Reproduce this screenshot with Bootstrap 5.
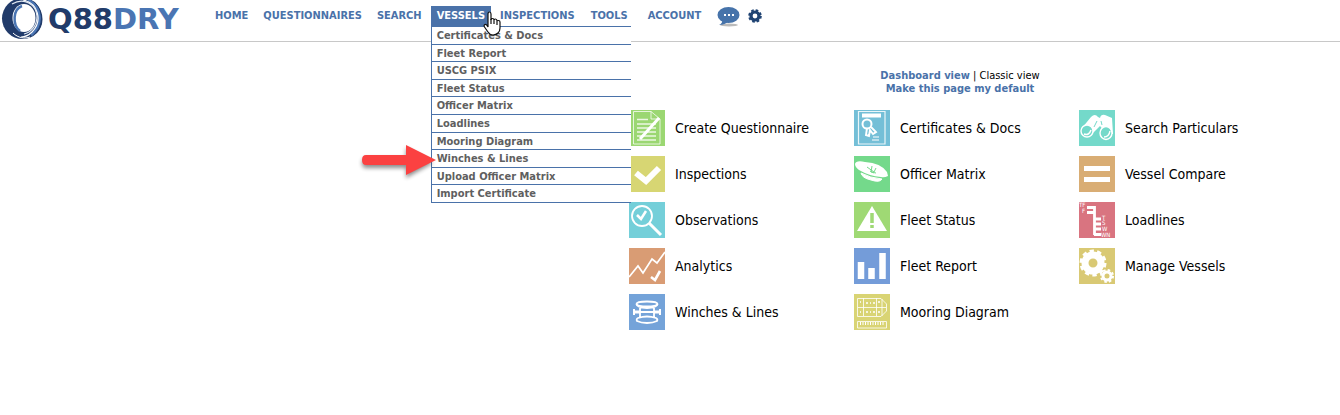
<!DOCTYPE html>
<html lang="en">
<head>
<meta charset="utf-8">
<meta name="viewport" content="width=device-width, initial-scale=1">
<title>Q88DRY</title>
<link href="https://cdn.jsdelivr.net/npm/bootstrap@5.3.0/dist/css/bootstrap.min.css" rel="stylesheet">
<style>
  :root { --q-blue: #4a72a9; --q-navy: #213b6a; --q-grey: #5f5f5f; }
  body { font-family: "DejaVu Sans Condensed", "DejaVu Sans", sans-serif; font-size: 11px; line-height: 13px; color: #000; background: #fff; }
  a { color: var(--q-blue); text-decoration: none; }
  .top-bar { height: 42px; border-bottom: 1px solid #c8c8c8; }
  .brand-link { width: 207px; height: 41px; }
  .brand-name { font: bold 29px/38px "DejaVu Sans", sans-serif; color: var(--q-navy); margin-left: 5px; }
  .brand-name span { color: #4a75b3; }
  .menu-bar { padding-top: 6px; font-weight: bold; }
  .menu-bar .nav-link { height: 20px; padding: 0 8px 0 7px; line-height: 20px; color: var(--q-blue); font-size: 11px; white-space: nowrap; }
  .menu-bar .nav-link.active { background: var(--q-blue); color: #fff; padding: 0 6px; }
  .menu-bar .active-item { margin: 0 1px; }
  .menu-bar .active-item ~ .nav-item > .nav-link { padding: 0 8px; }
  .menu-bar .nav { padding-left: 1px; }
  .menu-bar .icon-item { margin-left: 8px; }
  .vessel-menu { top: 20px; left: 0; width: 200px; height: 177px; background: #fff; border: solid var(--q-blue); border-width: 1px 0 0 1px; z-index: 5; }
  .vessel-menu li { flex: 1 1 0; border-bottom: 1px solid var(--q-blue); }
  .vessel-menu a { color: var(--q-grey); padding-left: 5px; line-height: 17px; display: block; height: 16px; }
  .pointer { left: 52px; top: 5px; z-index: 7; }
  .marker { left: -74px; top: 124px; z-index: 6; overflow: visible; }
  .marker .soft { filter: blur(2px); }
  .content-pane { margin-left: calc(50% - 41px); max-width: 662px; padding-top: 27px; }
  .tile-grid { display: grid; grid-template-columns: 225px 225px 1fr; row-gap: 10px; margin-top: 15px; }
  .tile { font-size: 14px; line-height: 18px; color: #000; gap: 10px; }
  .tile svg { width: 36px; height: 36px; flex: none; fill: none; stroke: #fff; }
</style>
</head>
<body>
<header class="top-bar d-flex">
  <a href="#" class="brand-link d-flex flex-shrink-0" aria-label="Q88DRY home">
    <svg width="43" height="41" viewBox="0 0 43 41" class="flex-shrink-0">
      <circle cx="22.500" cy="18.500" r="20.500" fill="#213b6a"/>
      <path d="M36 3C47 15 44 34 28 40L43 41V0Z" fill="#fff"/>
      <path d="M28 0C41 7 44 24 31 35" fill="none" stroke="#4a75b3" stroke-width="3"/>
      <path d="M23 0C38 3 43 21 32 32C29 35 25 37 21 37" fill="none" stroke="#fff" stroke-width="1.200"/>
      <path d="M12 4C24 -3 36 4 37 16C37 25 32 32 24 34" fill="none" stroke="#dfe7f2" stroke-width="1.200"/>
      <ellipse cx="24" cy="18" rx="11.500" ry="14" fill="#fff"/>
      <path d="M22 6C13 9 12 25 20 31" fill="none" stroke="#4a75b3" stroke-width="2.500"/>
      <path d="M13 33C18 38 25 39 30 37" fill="none" stroke="#fff" stroke-width="1"/>
    </svg>
    <span class="brand-name">Q88<span>DRY</span></span>
  </a>
  <nav class="menu-bar" aria-label="Main">
    <ul class="nav flex-nowrap">
      <li class="nav-item"><a class="nav-link" href="#">HOME</a></li>
      <li class="nav-item"><a class="nav-link" href="#">QUESTIONNAIRES</a></li>
      <li class="nav-item"><a class="nav-link" href="#">SEARCH</a></li>
      <li class="nav-item active-item position-relative">
        <a class="nav-link active" href="#" aria-expanded="true">VESSELS</a>
        <ul class="vessel-menu position-absolute list-unstyled d-flex flex-column m-0">
          <li><a href="#">Certificates &amp; Docs</a></li>
          <li><a href="#">Fleet Report</a></li>
          <li><a href="#">USCG PSIX</a></li>
          <li><a href="#">Fleet Status</a></li>
          <li><a href="#">Officer Matrix</a></li>
          <li><a href="#">Loadlines</a></li>
          <li><a href="#">Mooring Diagram</a></li>
          <li><a href="#">Winches &amp; Lines</a></li>
          <li><a href="#">Upload Officer Matrix</a></li>
          <li><a href="#">Import Certificate</a></li>
        </ul>
        <svg class="pointer position-absolute" width="18" height="25" viewBox="0 0 18 25">
          <path d="M5 16V3Q5 1 6.500 1T8 3V9Q8 7.500 9.500 7.500T11 9Q11 8 12.500 8T14 10Q14 9.500 15.500 9.500T17 11V17Q17 20 15 22Q13 24 10 24Q7 24 5 21L1.500 16Q.5 14 2 13.500T5 16Z" fill="#fff" stroke="#111" stroke-width="1.200"/>
          <path d="M8 8V13M11 9V13M14 10V14" stroke="#111" stroke-width="1.200"/>
        </svg>
        <svg class="marker position-absolute" width="90" height="46" viewBox="0 0 90 46">
          <path class="soft" d="M9 38Q5 38 5 33T9 28H49V18L76 33L49 48V38Z" fill="#000" opacity=".45"/>
          <path d="M9 35Q5 35 5 30T9 25H49V15L79 30L49 45V35Z" fill="#fb4141"/>
        </svg>
      </li>
      <li class="nav-item"><a class="nav-link" href="#">INSPECTIONS</a></li>
      <li class="nav-item"><a class="nav-link" href="#">TOOLS</a></li>
      <li class="nav-item ms-1"><a class="nav-link" href="#">ACCOUNT</a></li>
      <li class="nav-item icon-item"><a href="#" aria-label="Messages" class="d-block">
        <svg class="d-block" width="23" height="21" viewBox="0 0 23 21"><ellipse cx="12" cy="19" rx="9" ry="1.500" fill="#bbb"/><ellipse cx="11.500" cy="9" rx="11" ry="8" fill="#4673aa"/><path d="M5 14Q6 17 2 19Q8 19 12 15Z" fill="#4673aa"/><path d="M7 9H9M11 9H13M15 9H17" stroke="#fff" stroke-width="2"/></svg>
      </a></li>
      <li class="nav-item icon-item"><a href="#" aria-label="Settings" class="d-block">
        <svg class="d-block" width="14" height="20" viewBox="0 0 14 20"><circle cx="7" cy="10" r="4" fill="none" stroke="#1f4373" stroke-width="3.200"/><circle cx="7" cy="10" r="5.800" fill="none" stroke="#1f4373" stroke-width="2" stroke-dasharray="2.600 1.950"/></svg>
      </a></li>
    </ul>
  </nav>
</header>

<main class="content-pane">
  <div class="text-center">
    <a href="#" class="fw-bold">Dashboard view</a> | Classic view<br>
    <a href="#" class="fw-bold">Make this page my default</a>
  </div>
  <div class="tile-grid">
    <a href="#" class="tile d-flex align-items-center"><svg viewBox="0 0 36 36"><path fill="#9bd772" stroke="none" d="M0 0H36V36H0Z"/><path d="M4.500 1.500H22L31 9V34H4.500ZM22 1.500V9H31" opacity=".75"/><path d="M8 9.500H19M8 14H27M8 18H27M8 22H27M8 26H27M8 30H27" opacity=".8" stroke-width="1.400"/><path d="M11 29L30 8" stroke-width="3"/></svg>Create Questionnaire</a>
    <a href="#" class="tile d-flex align-items-center"><svg viewBox="0 0 36 36"><path fill="#74bfd7" stroke="none" d="M0 0H36V36H0Z"/><path d="M4.500 1.500H31V34H4.500Z" stroke-width="1.200" opacity=".85"/><path d="M8 5.500H27" stroke-width="4"/><circle cx="13" cy="14" r="4.500" stroke-width="2"/><path d="M13 18L12 25L15 26L16 20L19 24L22 22L17 17" stroke-width="1.900"/><path d="M19 27H25M18 30H25" stroke-width="1.200"/></svg>Certificates &amp; Docs</a>
    <a href="#" class="tile d-flex align-items-center"><svg viewBox="0 0 36 36"><path fill="#74d9ca" stroke="none" d="M0 0H36V36H0Z"/><path d="M3 18L12 7Q16 3 19 7L21 8Q22 4 26 5L33 8L34 24H28L21 16L13 24Z" fill="#fff" stroke="none"/><circle cx="8" cy="21" r="6" fill="#74d9ca" stroke-width="1.400"/><ellipse cx="27" cy="23" rx="6" ry="6.500" fill="#74d9ca" stroke-width="1.400"/><path d="M5 24Q10 26 12 20M25 27Q30 27 31 21" stroke-width="1.500"/><path d="M18 11L15 17M22 11L23 15" stroke="#74d9ca"/></svg>Search Particulars</a>

    <a href="#" class="tile d-flex align-items-center"><svg viewBox="0 0 36 36"><path fill="#d7d673" stroke="none" d="M0 0H36V36H0Z"/><path d="M7 17L17 25L30 12" stroke-width="6"/></svg>Inspections</a>
    <a href="#" class="tile d-flex align-items-center"><svg viewBox="0 0 36 36"><path fill="#74d98b" stroke="none" d="M0 0H36V36H0Z"/><path d="M1 8Q2 4 11 6Q27 7 33 16L34 20Q30 22 27 21Q15 20 5 14Q1 11 1 8Z" fill="#fff" stroke="none"/><path d="M7 17Q16 22 28 23Q26 27 17 24Q8 22 7 17Z" fill="#fff"/><path d="M13 11L20 16L22 12M18 10L17 16L22 17M16 15L20 17" stroke="#74d98b"/></svg>Officer Matrix</a>
    <a href="#" class="tile d-flex align-items-center"><svg viewBox="0 0 36 36"><path fill="#d9ad74" stroke="none" d="M0 0H36V36H0Z"/><path d="M5 12.500H31M5 23.500H31" stroke-width="5"/></svg>Vessel Compare</a>

    <a href="#" class="tile d-flex align-items-center"><svg viewBox="0 0 36 36"><path fill="#74cfd9" stroke="none" d="M0 0H36V36H0Z"/><circle cx="13" cy="14" r="10" stroke-width="1.800"/><path d="M20 21L32 33" stroke-width="3"/><path d="M8 13L12 17L17 9" stroke-width="2.500"/></svg>Observations</a>
    <a href="#" class="tile d-flex align-items-center"><svg viewBox="0 0 36 36"><path fill="#9fd974" stroke="none" d="M0 0H36V36H0Z"/><path d="M18 4L33 29H3Z" fill="#fff" stroke="none"/><path d="M18 11V21M18 23V26" stroke="#9fd974" stroke-width="3.500"/></svg>Fleet Status</a>
    <a href="#" class="tile d-flex align-items-center"><svg viewBox="0 0 36 36"><path fill="#d97480" stroke="none" d="M0 0H36V36H0Z"/><path d="M8 5.500H15.500V33M8 10.500H15M15 17H22M15 22H22M15 27H22M15 32.500H22" stroke-width="2.800"/><g fill="#fff" stroke="none" font-family="DejaVu Sans Condensed" font-size="6"><text x="0" y="5">TF</text><text x="3" y="11">F</text><text x="23" y="18">T</text><text x="23" y="23">S</text><text x="23" y="29">W</text><text x="22" y="35">WN</text></g></svg>Loadlines</a>

    <a href="#" class="tile d-flex align-items-center"><svg viewBox="0 0 36 36"><path fill="#d99c74" stroke="none" d="M0 0H36V36H0Z"/><path d="M0 29L9 18L14 25L23 11L28 15L36 4" stroke-width="1.700"/><path d="M22 29L26 32L31 23" stroke-width="2.600"/></svg>Analytics</a>
    <a href="#" class="tile d-flex align-items-center"><svg viewBox="0 0 36 36"><path fill="#749cd9" stroke="none" d="M0 0H36V36H0Z"/><path d="M7 14V31M17.500 20V31M28.500 5V31" stroke-width="6.500"/></svg>Fleet Report</a>
    <a href="#" class="tile d-flex align-items-center"><svg viewBox="0 0 36 36"><path fill="#d9c974" stroke="none" d="M0 0H36V36H0Z"/><circle cx="14" cy="15" r="8" stroke-width="7"/><circle cx="14" cy="15" r="12" stroke-width="3" stroke-dasharray="4.300 3.240"/><circle cx="28" cy="28" r="4" stroke-width="3"/><circle cx="28" cy="28" r="6" stroke-width="2" stroke-dasharray="2.500 2.210"/></svg>Manage Vessels</a>

    <a href="#" class="tile d-flex align-items-center"><svg viewBox="0 0 36 36"><path fill="#74a3d9" stroke="none" d="M0 0H36V36H0Z"/><ellipse cx="18" cy="10" rx="10.500" ry="2.500" stroke-width="1.800"/><path d="M7.500 10Q8 14 18 14T28.500 10M11 13V24M25 13V24M11 18H25M9 24Q7 25 8 27Q12 29 18 29T28 27Q29 25 27 24Q18 21 9 24Z" stroke-width="1.800"/><path d="M5 18H11M25 18H31" stroke-width="3"/><path d="M5 15V21M31 15V21" stroke-width="2"/></svg>Winches &amp; Lines</a>
    <a href="#" class="tile d-flex align-items-center"><svg viewBox="0 0 36 36"><path fill="#d9d474" stroke="none" d="M0 0H36V36H0Z"/><path d="M3.500 4.500H27L32.500 10V17L27 22.500H3.500ZM9.500 4V22M22.500 4V22M28 5V22M4 13.500H32M3.500 27.500H32.500V34H3.500Z" stroke-width="1" opacity=".8"/><path d="M6 8H7M12 9H14M16 9H17M19 9H21M24 8H26M6 18H7M12 18H14M16 18H17M19 18H21M24 18H26" stroke-width="1.500"/><path d="M6 29.500H31" stroke-width="3" stroke-dasharray="1 1.500"/></svg>Mooring Diagram</a>
  </div>
</main>
<script src="https://cdn.jsdelivr.net/npm/bootstrap@5.3.0/dist/js/bootstrap.bundle.min.js"></script>
</body>
</html>
